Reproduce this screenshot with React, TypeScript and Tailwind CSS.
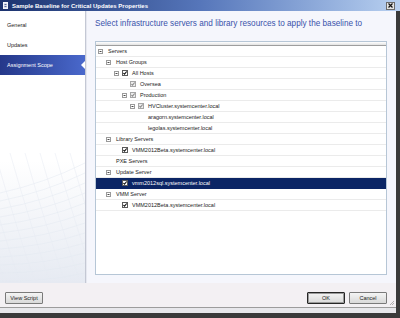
import React from 'react'

type Row = {
  label: string
  level: number
  expander?: boolean
  check?: 'on' | 'dim'
  selected?: boolean
}

const rows: Row[] = [
  { label: 'Servers', level: 0, expander: true },
  { label: 'Host Groups', level: 1, expander: true },
  { label: 'All Hosts', level: 2, expander: true, check: 'on' },
  { label: 'Oversea', level: 3, check: 'dim' },
  { label: 'Production', level: 3, expander: true, check: 'dim' },
  { label: 'HVCluster.systemcenter.local', level: 4, expander: true, check: 'dim' },
  { label: 'aragorn.systemcenter.local', level: 5 },
  { label: 'legolas.systemcenter.local', level: 5 },
  { label: 'Library Servers', level: 1, expander: true },
  { label: 'VMM2012Beta.systemcenter.local', level: 2, check: 'on' },
  { label: 'PXE Servers', level: 1 },
  { label: 'Update Server', level: 1, expander: true },
  { label: 'vmm2012sql.systemcenter.local', level: 2, check: 'on', selected: true },
  { label: 'VMM Server', level: 1, expander: true },
  { label: 'VMM2012Beta.systemcenter.local', level: 2, check: 'on' },
]

const indent = ['pl-[2px]', 'pl-[10px]', 'pl-[18px]', 'pl-[26px]', 'pl-[34px]', 'pl-[42px]']

const pages = ['General', 'Updates', 'Assignment Scope']

// faint perspective grid behind the page list
const gridH = [0, 1, 2, 3, 4, 5, 6, 7, 8, 9, 10, 11]
const gridV = [-40, -25, -10, 5, 20, 35, 50, 65, 80, 95, 110, 125]

function Expander() {
  return (
    <svg width="5" height="5" viewBox="0 0 5 5" className="block">
      <rect x="0.5" y="0.5" width="4" height="4" fill="#fff" stroke="#9a9a9a" />
      <line x1="1.5" y1="2.5" x2="3.5" y2="2.5" stroke="#4a4a4a" />
    </svg>
  )
}

function Check({ kind }: { kind: 'on' | 'dim' }) {
  const mark = kind === 'on' ? '#111' : '#8c8c8c'
  return (
    <svg width="6" height="6" viewBox="0 0 6 6" className="block">
      <rect x="0.5" y="0.5" width="5" height="5" fill={kind === 'on' ? '#fff' : '#ececec'} stroke={kind === 'on' ? '#5a5a5a' : '#a6a6a6'} />
      <path d="M1.4 3 L2.5 4.2 L4.7 1.5" fill="none" stroke={mark} strokeWidth="1.1" />
    </svg>
  )
}

function TreeRow({ row }: { row: Row }) {
  return (
    <div
      className={`flex h-[11px] shrink-0 items-center border-b ${indent[row.level]} ${
        row.selected ? 'border-[#0b2565] bg-[#0b2565] text-white' : 'border-[#ebebeb] text-[#1b1b1b]'
      }`}
    >
      <div className="flex w-[8px] shrink-0 items-center">{row.expander && <Expander />}</div>
      {row.check ? (
        <>
          <Check kind={row.check} />
          <span className="ml-[4px] whitespace-nowrap">{row.label}</span>
        </>
      ) : (
        <span className="ml-[2px] whitespace-nowrap">{row.label}</span>
      )}
    </div>
  )
}

function Btn({ label, primary }: { label: string; primary?: boolean }) {
  return (
    <button
      className={`flex h-[12px] w-[38px] items-center justify-center rounded-[1px] border bg-linear-to-b from-[#f4f4f4] to-[#d9d9d9] text-[5.5px] text-[#222] ${
        primary ? 'border-[#262626] shadow-[inset_0_0_0_1px_#9a9a9a]' : 'border-[#7a7a7a]'
      }`}
    >
      {label}
    </button>
  )
}

export default function App() {
  return (
    <div className="flex h-[318px] w-[400px] flex-col overflow-hidden bg-[#3a3a3a] font-['Liberation_Sans',Arial,sans-serif]">
      {/* title bar */}
      <div className="flex h-[11px] shrink-0 items-center bg-linear-to-r from-[#1c336f] via-[#5676ba] to-[#b8d0f0]">
        <svg width="5" height="7" viewBox="0 0 5 7" className="ml-[3px] block">
          <rect x="0.5" y="0.5" width="4" height="6" fill="#d8dff0" stroke="#f4f6fb" />
          <line x1="1.5" y1="2.5" x2="3.5" y2="2.5" stroke="#5a6a94" />
          <line x1="1.5" y1="4.5" x2="3.5" y2="4.5" stroke="#5a6a94" />
        </svg>
        <span className="ml-[4px] whitespace-nowrap text-[6px] leading-none font-bold text-white">
          Sample Baseline for Critical Updates Properties
        </span>
        <div className="mr-[5px] ml-auto flex h-[8px] w-[9px] items-center justify-center border border-[#6b6b6b] bg-[#e4e4e4]">
          <svg width="5" height="5" viewBox="0 0 5 5" className="block">
            <path d="M0.5 0.5 L4.5 4.5 M4.5 0.5 L0.5 4.5" stroke="#111" strokeWidth="1.2" />
          </svg>
        </div>
      </div>

      <div className="flex min-h-0 flex-1">
        {/* window body */}
        <div className="flex w-[396px] flex-col">
          <div className="flex min-h-0 flex-1">
            {/* page list */}
            <div className="relative flex w-[86px] shrink-0 flex-col border-r border-[#c4c8d4] bg-linear-to-b from-white via-white via-55% to-[#e6eaf2] pt-[4px]">
              <svg width="85" height="130" viewBox="0 0 85 130" className="absolute bottom-0 left-0 block">
                {gridH.map((k) => (
                  <path
                    key={'h' + k}
                    d={`M0 ${40 + k * 8} Q 45 ${30 + k * 9} 85 ${10 + k * 10}`}
                    fill="none"
                    stroke="#e3e8f0"
                    strokeWidth="0.5"
                  />
                ))}
                {gridV.map((x) => (
                  <path key={'v' + x} d={`M${x + 30} 130 Q ${x + 10} 70 ${x - 10} 0`} fill="none" stroke="#e6eaf2" strokeWidth="0.5" />
                ))}
              </svg>
              {pages.map((p, i) =>
                i === 2 ? (
                  <div
                    key={p}
                    className="relative flex h-[20px] items-center bg-linear-to-r from-[#25388a] to-[#4a69cc] pl-[7px] text-[5.5px] text-white"
                  >
                    {p}
                    <div className="absolute top-[6px] right-0 h-0 w-0 border-y-[4px] border-r-[4px] border-y-transparent border-r-white" />
                  </div>
                ) : (
                  <div key={p} className="relative flex h-[20px] items-center pl-[7px] text-[5.5px] text-[#1b1b1b]">
                    {p}
                  </div>
                )
              )}
            </div>

            {/* content */}
            <div className="flex min-w-0 flex-1 flex-col border-l border-[#e6e8f0] bg-[#f5f6fc] pt-[8px] pr-[9px] pb-[8px] pl-[8px]">
              <div className="text-[8.2px] leading-[10px] whitespace-nowrap text-[#3a53ab]">
                Select infrastructure servers and library resources to apply the baseline to
              </div>
              <div className="mt-[12px] flex min-h-0 flex-1 flex-col overflow-hidden border border-[#b6c6d6] bg-white text-[5.5px]">
                <div className="h-[4px] shrink-0 border-b border-[#9e9e9e] bg-linear-to-b from-white to-[#e2e2e2]" />
                {rows.map((r, i) => (
                  <TreeRow key={i} row={r} />
                ))}
              </div>
            </div>
          </div>

          {/* buttons */}
          <div className="relative flex h-[24px] shrink-0 items-start bg-[#f3f0f3] pt-[9px] pr-[9px] pl-[5px]">
            <Btn label="View Script" />
            <div className="ml-auto flex gap-[4px]">
              <Btn label="OK" primary />
              <Btn label="Cancel" />
            </div>
            <svg width="6" height="6" viewBox="0 0 6 6" className="absolute right-[1px] bottom-[1px] block">
              <path d="M5 1 L1 5 M5 3 L3 5" stroke="#a0a0a0" strokeWidth="0.8" />
            </svg>
          </div>
          <div className="h-[6px] shrink-0 border-t border-[#9c9c9c] bg-[#e7e7eb]" />
        </div>
        <div className="w-[4px] shrink-0 bg-[#3a3a3a]" />
      </div>
      <div className="h-[5px] shrink-0 bg-[#3a3a3a]" />
    </div>
  )
}
